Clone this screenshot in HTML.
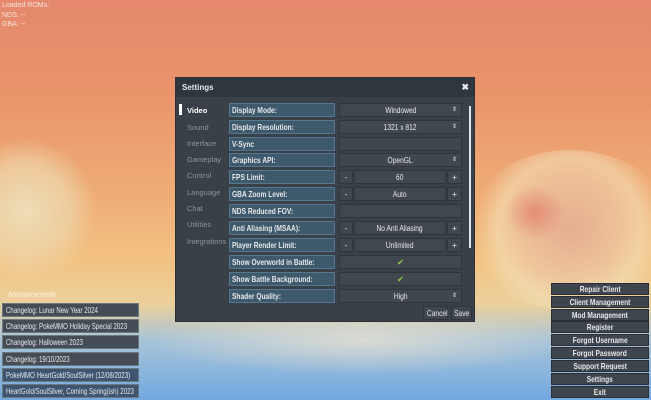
<!DOCTYPE html>
<html><head><meta charset="utf-8"><style>
*{margin:0;padding:0;box-sizing:border-box}
body{width:651px;height:400px;overflow:hidden;position:relative;font-family:"Liberation Sans",sans-serif;font-size:8.5px;color:#e6e8ea;
background:linear-gradient(180deg,#e5886c 0%,#ea956c 25%,#efae76 50%,#f2c282 65%,#ecd09c 76%,#a8c4d8 85%,#72a8e0 100%)}
.a{position:absolute}
.cl{position:absolute;border-radius:50%}
.n{display:inline-block;transform:scaleX(.78);transform-origin:left center;vertical-align:top}
.an .n{transform:scaleX(.72)}
.val .n,.rb .n{transform-origin:center}
.dlg{left:175px;top:77px;width:300px;height:245px;background:#3a4047;border:1px solid #2a3036}
.tb{left:0;top:0;width:298px;height:19px;background:#2f363d;font-weight:bold;font-size:8px;padding:5px 0 0 6px}
.lab{height:14px;width:106px;background:#3f596c;border:1px solid #55788e;border-radius:1px;padding-left:2px;line-height:12px;font-weight:bold;white-space:nowrap}
.val{height:14px;background:#41474e;border:1px solid #2f353b;border-radius:1px;text-align:center;line-height:12px;white-space:nowrap}
.tab{left:11px;color:#8d9399;font-size:7.5px}
.an{left:2px;width:137px;height:14px;background:#444d55;border:1px solid #6c7a80;padding-left:3px;line-height:12px;white-space:nowrap;overflow:hidden}
.rb{left:551px;width:98px;height:12px;background:#3e454c;border:1px solid #2a2f35;text-align:center;line-height:10px;font-weight:bold;white-space:nowrap}
</style></head><body>
<div class="cl" style="left:-50px;top:140px;width:150px;height:140px;background:radial-gradient(circle at 50% 50%,rgba(238,226,190,.9) 0%,rgba(238,214,170,.7) 45%,rgba(240,200,150,0) 70%)"></div>
<div class="cl" style="left:465px;top:150px;width:210px;height:160px;background:radial-gradient(circle at 50% 50%,rgba(226,170,150,.8) 0%,rgba(238,200,165,.7) 40%,rgba(243,224,184,.6) 55%,rgba(240,200,150,0) 72%)"></div>
<div class="cl" style="left:505px;top:185px;width:60px;height:55px;background:radial-gradient(rgba(224,120,105,.7),rgba(230,150,130,0) 70%)"></div>
<div class="cl" style="left:150px;top:305px;width:420px;height:70px;background:radial-gradient(rgba(230,224,210,.8),rgba(220,210,200,0) 70%)"></div>
<div class="a" style="left:2px;top:1px;font-size:7px;line-height:9.5px;color:#f4e4dc">Loaded ROMs:<br>NDS: --<br>GBA: --</div>

<div class="a dlg">
<div class="a tb">Settings<span style="position:absolute;right:5px;top:4px;font-size:9px">✖</span></div>
<div class="a" style="left:3px;top:26px;width:3px;height:11px;background:#fff"></div>
<div class="a tab" style="top:28px;color:#fff;font-weight:bold">Video</div>
<div class="a tab" style="top:45px">Sound</div>
<div class="a tab" style="top:61px">Interface</div>
<div class="a tab" style="top:77px">Gameplay</div>
<div class="a tab" style="top:93px">Control</div>
<div class="a tab" style="top:110px">Language</div>
<div class="a tab" style="top:126px">Chat</div>
<div class="a tab" style="top:142px">Utilities</div>
<div class="a tab" style="top:159px">Integrations</div>
<div class="a" style="left:293px;top:28px;width:2px;height:142px;background:#dfe3e6"></div>

<div class="a lab" style="left:53px;top:25px"><span class="n">Display Mode:</span></div>
<div class="a val" style="left:163px;top:25px;width:123px"><span class="n">Windowed</span><span style="position:absolute;right:4px;font-size:6px">⇕</span></div>
<div class="a lab" style="left:53px;top:42px"><span class="n">Display Resolution:</span></div>
<div class="a val" style="left:163px;top:42px;width:123px"><span class="n">1321 x 812</span><span style="position:absolute;right:4px;font-size:6px">⇕</span></div>
<div class="a lab" style="left:53px;top:59px"><span class="n">V-Sync</span></div>
<div class="a val" style="left:163px;top:59px;width:123px"></div>
<div class="a lab" style="left:53px;top:75px"><span class="n">Graphics API:</span></div>
<div class="a val" style="left:163px;top:75px;width:123px"><span class="n">OpenGL</span><span style="position:absolute;right:4px;font-size:6px">⇕</span></div>
<div class="a lab" style="left:53px;top:92px"><span class="n">FPS Limit:</span></div>
<div class="a val" style="left:163px;top:92px;width:14px">-</div><div class="a val" style="left:178px;top:92px;width:92px"><span class="n">60</span></div><div class="a val" style="left:271px;top:92px;width:15px">+</div>
<div class="a lab" style="left:53px;top:109px"><span class="n">GBA Zoom Level:</span></div>
<div class="a val" style="left:163px;top:109px;width:14px">-</div><div class="a val" style="left:178px;top:109px;width:92px"><span class="n">Auto</span></div><div class="a val" style="left:271px;top:109px;width:15px">+</div>
<div class="a lab" style="left:53px;top:126px"><span class="n">NDS Reduced FOV:</span></div>
<div class="a val" style="left:163px;top:126px;width:123px"></div>
<div class="a lab" style="left:53px;top:143px"><span class="n">Anti Aliasing (MSAA):</span></div>
<div class="a val" style="left:163px;top:143px;width:14px">-</div><div class="a val" style="left:178px;top:143px;width:92px"><span class="n">No Anti Aliasing</span></div><div class="a val" style="left:271px;top:143px;width:15px">+</div>
<div class="a lab" style="left:53px;top:160px"><span class="n">Player Render Limit:</span></div>
<div class="a val" style="left:163px;top:160px;width:14px">-</div><div class="a val" style="left:178px;top:160px;width:92px"><span class="n">Unlimited</span></div><div class="a val" style="left:271px;top:160px;width:15px">+</div>
<div class="a lab" style="left:53px;top:177px"><span class="n">Show Overworld in Battle:</span></div>
<div class="a val" style="left:163px;top:177px;width:123px;color:#8cc84a">✔</div>
<div class="a lab" style="left:53px;top:194px"><span class="n">Show Battle Background:</span></div>
<div class="a val" style="left:163px;top:194px;width:123px;color:#8cc84a">✔</div>
<div class="a lab" style="left:53px;top:211px"><span class="n">Shader Quality:</span></div>
<div class="a val" style="left:163px;top:211px;width:123px"><span class="n">High</span><span style="position:absolute;right:4px;font-size:6px">⇕</span></div>
<div class="a val" style="left:247px;top:228px;width:25px;height:14px"><span class="n">Cancel</span></div>
<div class="a val" style="left:275px;top:228px;width:21px;height:14px"><span class="n">Save</span></div>
</div>

<div class="a" style="left:8px;top:289px;color:#fbf3e6"><span class="n">Announcements</span></div>
<div class="a an" style="top:303px"><span class="n">Changelog: Lunar New Year 2024</span></div>
<div class="a an" style="top:319px"><span class="n">Changelog: PokeMMO Holiday Special 2023</span></div>
<div class="a an" style="top:335px"><span class="n">Changelog: Halloween 2023</span></div>
<div class="a an" style="top:352px"><span class="n">Changelog: 19/10/2023</span></div>
<div class="a an" style="top:368px;background:#3d5570"><span class="n">PokeMMO HeartGold/SoulSilver (12/08/2023)</span></div>
<div class="a an" style="top:384px;background:#3d5570"><span class="n">HeartGold/SoulSilver, Coming Spring(ish) 2023</span></div>

<div class="a rb" style="top:283px"><span class="n">Repair Client</span></div>
<div class="a rb" style="top:296px"><span class="n">Client Management</span></div>
<div class="a rb" style="top:309px"><span class="n">Mod Management</span></div>
<div class="a rb" style="top:321px"><span class="n">Register</span></div>
<div class="a rb" style="top:334px"><span class="n">Forgot Username</span></div>
<div class="a rb" style="top:347px"><span class="n">Forgot Password</span></div>
<div class="a rb" style="top:360px"><span class="n">Support Request</span></div>
<div class="a rb" style="top:373px"><span class="n">Settings</span></div>
<div class="a rb" style="top:386px"><span class="n">Exit</span></div>
</body></html>
